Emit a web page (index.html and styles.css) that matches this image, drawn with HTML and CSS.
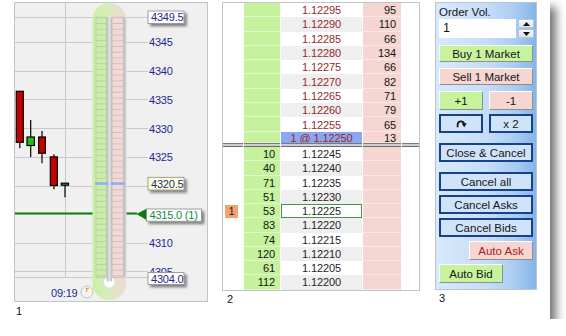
FILE: index.html
```html
<!DOCTYPE html>
<html>
<head>
<meta charset="utf-8">
<link rel="stylesheet" href="styles.css">
</head>
<body>
<div class="sheet">
  <div class="pane pane--chart">
    <div class="chart">
      <svg viewBox="15 3 192 298" width="192" height="298">
        <defs>
          <linearGradient id="tube" x1="0" x2="1" y1="0" y2="0">
            <stop offset="0" stop-color="#c8f1a0"/>
            <stop offset="0.5" stop-color="#d9ecc0"/>
            <stop offset="1" stop-color="#eed9d2"/>
          </linearGradient>
          <linearGradient id="chan" x1="0" x2="1" y1="0" y2="0">
            <stop offset="0" stop-color="#b9b9b9"/>
            <stop offset="0.5" stop-color="#e4e4e4"/>
            <stop offset="1" stop-color="#bdbdbd"/>
          </linearGradient>
          <linearGradient id="shade" x1="0" x2="1" y1="0" y2="0">
            <stop offset="0" stop-color="#b5b5b5"/>
            <stop offset="1" stop-color="#dedede"/>
          </linearGradient>
          <pattern id="rungs" patternUnits="userSpaceOnUse" x="0" y="17.3" width="60" height="5.735">
            <rect x="0" y="0" width="60" height="1" fill="#c4c4c4"/>
          </pattern>
          <filter id="sh" x="-20%" y="-30%" width="150%" height="190%">
            <feDropShadow dx="2.5" dy="2.5" stdDeviation="1.1" flood-color="#000" flood-opacity="0.45"/>
          </filter>
        </defs>

        <g stroke="#c9c9c9" stroke-width="1">
          <line x1="15" y1="17.5" x2="148" y2="17.5"/>
          <line x1="15" y1="42.5" x2="148" y2="42.5"/>
          <line x1="15" y1="71.5" x2="148" y2="71.5"/>
          <line x1="15" y1="99.5" x2="148" y2="99.5"/>
          <line x1="15" y1="128.5" x2="148" y2="128.5"/>
          <line x1="15" y1="157.5" x2="148" y2="157.5"/>
          <line x1="15" y1="186.5" x2="148" y2="186.5"/>
          <line x1="15" y1="243.5" x2="148" y2="243.5"/>
          <line x1="15" y1="271.5" x2="148" y2="271.5"/>
          <line x1="15" y1="277.5" x2="148" y2="277.5"/>
          <line x1="65.5" y1="3" x2="65.5" y2="277.5"/>
        </g>

        <g stroke="#000" stroke-width="1.2">
          <line x1="19.8" y1="142" x2="19.8" y2="148.3"/>
          <rect x="16.3" y="91.3" width="7" height="51" fill="#c40000"/>
          <line x1="30.7" y1="120" x2="30.7" y2="157"/>
          <rect x="27" y="137" width="7.4" height="8.5" fill="#1cc01c"/>
          <line x1="42" y1="131" x2="42" y2="163.3"/>
          <rect x="38.6" y="137" width="6.8" height="16.2" fill="#c40000"/>
          <line x1="54" y1="154.3" x2="54" y2="189.3"/>
          <rect x="50.3" y="156.9" width="7.1" height="28.6" fill="#c40000"/>
          <line x1="65" y1="184" x2="65" y2="197.3"/>
          <rect x="61.3" y="183.2" width="7.2" height="2" fill="#1cc01c"/>
        </g>

        <line x1="15" y1="213.6" x2="137" y2="213.6" stroke="#0a7a0a" stroke-width="2"/>
        <polygon points="136.5,214 147,208.6 147,220.2" fill="#0a7a0a"/>

        <rect x="92.5" y="3" width="33.6" height="297" rx="16.8" ry="16.8" fill="url(#tube)"/>
        <circle cx="109.3" cy="282.2" r="5.9" fill="#fff" stroke="#d6d6d6" stroke-width="0.8"/>
        <rect x="106.7" y="17.3" width="5.4" height="264" fill="url(#chan)"/>
        <rect x="123.3" y="17.3" width="3.3" height="260" fill="url(#shade)"/>
        <rect x="96" y="17.3" width="10.7" height="260" fill="#c6f2a0" stroke="#bdbdbd" stroke-width="0.8"/>
        <rect x="96" y="17.3" width="10.7" height="260" fill="url(#rungs)"/>
        <rect x="112.1" y="17.3" width="11.2" height="260" fill="#f5d8d4" stroke="#bdbdbd" stroke-width="0.8"/>
        <rect x="112.1" y="17.3" width="11.2" height="260" fill="url(#rungs)"/>
        <rect x="95" y="182.2" width="13.3" height="2.6" fill="#8db0f3"/>
        <rect x="111" y="182.2" width="13.3" height="2.6" fill="#8db0f3"/>

        <g class="axis">
          <text x="149" y="46.3">4345</text>
          <text x="149" y="75">4340</text>
          <text x="149" y="103.8">4335</text>
          <text x="149" y="132.5">4330</text>
          <text x="149" y="161.1">4325</text>
          <text x="149" y="247.3">4310</text>
          <text x="149" y="275.8">4305</text>
        </g>

        <g class="tag">
          <rect x="148" y="11" width="36" height="12.5" fill="#fff" stroke="#8a8a8a" stroke-width="0.8" filter="url(#sh)"/>
          <text x="151" y="21.2">4349.5</text>
          <rect x="148" y="177.3" width="36" height="12.7" fill="#ffffd4" stroke="#8a8a8a" stroke-width="0.8" filter="url(#sh)"/>
          <text x="151" y="187.7">4320.5</text>
          <rect x="146.5" y="209" width="55" height="12.2" fill="#fff" stroke="#8a8a8a" stroke-width="0.8" filter="url(#sh)"/>
          <text x="149.5" y="219" class="tag-pos">4315.0 (1)</text>
          <rect x="148" y="272.6" width="36" height="11.8" fill="#fff" stroke="#8a8a8a" stroke-width="0.8" filter="url(#sh)"/>
          <text x="151" y="282.6">4304.0</text>
        </g>

        <text x="51" y="297.3" class="axis-t">09:19</text>
        <circle cx="87" cy="292" r="6" fill="#f3f3f3" stroke="#bcbcbc" stroke-width="0.9"/>
        <path d="M86.6 292 V288.3 H88.8" fill="none" stroke="#f0a02a" stroke-width="1.2"/>
      </svg>
    </div>
    <div class="caption caption--chart">1</div>
  </div>

  <div class="pane pane--dom">
    <div class="dom">
      <div class="ladder">
        <div class="c"></div><div class="c bid"></div><div class="c px sell">1.12295</div><div class="c ask vol">95</div><div class="c"></div>
        <div class="c"></div><div class="c bid"></div><div class="c px sell alt">1.12290</div><div class="c ask vol">110</div><div class="c"></div>
        <div class="c"></div><div class="c bid"></div><div class="c px sell">1.12285</div><div class="c ask vol">66</div><div class="c"></div>
        <div class="c"></div><div class="c bid"></div><div class="c px sell alt">1.12280</div><div class="c ask vol">134</div><div class="c"></div>
        <div class="c"></div><div class="c bid"></div><div class="c px sell">1.12275</div><div class="c ask vol">66</div><div class="c"></div>
        <div class="c"></div><div class="c bid"></div><div class="c px sell alt">1.12270</div><div class="c ask vol">82</div><div class="c"></div>
        <div class="c"></div><div class="c bid"></div><div class="c px sell">1.12265</div><div class="c ask vol">71</div><div class="c"></div>
        <div class="c"></div><div class="c bid"></div><div class="c px sell alt">1.12260</div><div class="c ask vol">79</div><div class="c"></div>
        <div class="c"></div><div class="c bid"></div><div class="c px sell">1.12255</div><div class="c ask vol">65</div><div class="c"></div>
        <div class="c"></div><div class="c bid"></div><div class="c px sell last">1 @ 1.12250</div><div class="c ask vol">13</div><div class="c"></div>
        <div class="sep"></div><div class="sep"></div><div class="sep"></div><div class="sep"></div><div class="sep"></div>
        <div class="c"></div><div class="c bid vol">10</div><div class="c px buy">1.12245</div><div class="c ask"></div><div class="c"></div>
        <div class="c"></div><div class="c bid vol">40</div><div class="c px buy alt">1.12240</div><div class="c ask"></div><div class="c"></div>
        <div class="c"></div><div class="c bid vol">71</div><div class="c px buy">1.12235</div><div class="c ask"></div><div class="c"></div>
        <div class="c"></div><div class="c bid vol">51</div><div class="c px buy alt">1.12230</div><div class="c ask"></div><div class="c"></div>
        <div class="c"><span class="ord">1</span></div><div class="c bid vol">53</div><div class="c px buy sel">1.12225</div><div class="c ask"></div><div class="c"></div>
        <div class="c"></div><div class="c bid vol">83</div><div class="c px buy alt">1.12220</div><div class="c ask"></div><div class="c"></div>
        <div class="c"></div><div class="c bid vol">74</div><div class="c px buy">1.12215</div><div class="c ask"></div><div class="c"></div>
        <div class="c"></div><div class="c bid vol">120</div><div class="c px buy alt">1.12210</div><div class="c ask"></div><div class="c"></div>
        <div class="c"></div><div class="c bid vol">61</div><div class="c px buy">1.12205</div><div class="c ask"></div><div class="c"></div>
        <div class="c"></div><div class="c bid vol">112</div><div class="c px buy alt">1.12200</div><div class="c ask"></div><div class="c"></div>
      </div>
    </div>
    <div class="caption caption--dom">2</div>
  </div>

  <div class="pane pane--order">
    <div class="order">
      <div class="ov-label">Order Vol.</div>
      <div class="ov-row">
        <div class="field">1</div>
        <div class="spin">
          <div class="spin-btn"><svg width="7" height="4" viewBox="0 0 7 4"><polygon points="3.5,0 7,4 0,4" fill="#111"/></svg></div>
          <div class="spin-btn"><svg width="7" height="4" viewBox="0 0 7 4"><polygon points="0,0 7,0 3.5,4" fill="#111"/></svg></div>
        </div>
      </div>
      <button class="btn btn-g btn-slim gap-7">Buy 1 Market</button>
      <button class="btn btn-p btn-slim gap-6">Sell 1 Market</button>
      <div class="pair gap-6">
        <button class="btn btn-g half">+1</button>
        <button class="btn btn-p half">-1</button>
      </div>
      <div class="pair gap-4">
        <button class="btn btn-b half"><svg width="11" height="10" viewBox="0 0 11 10"><path d="M1.6 8.2 V5.6 A3.4 3.4 0 0 1 8.2 4.6" fill="none" stroke="#111" stroke-width="1.7"/><polygon points="5.6,4.3 10.8,4.3 8.2,8.3" fill="#111"/></svg></button>
        <button class="btn btn-b half">x 2</button>
      </div>
      <button class="btn btn-b gap-10">Close &amp; Cancel</button>
      <button class="btn btn-b gap-10">Cancel all</button>
      <button class="btn btn-b gap-4">Cancel Asks</button>
      <button class="btn btn-b gap-4">Cancel Bids</button>
      <button class="btn btn-p auto auto-ask gap-4">Auto Ask</button>
      <button class="btn btn-g auto gap-4">Auto Bid</button>
    </div>
    <div class="caption caption--order">3</div>
  </div>
</div>
</body>
</html>
```

FILE: styles.css
```css
* { box-sizing: border-box; }
html, body { margin: 0; background: #fff; }
body { font-family: "Liberation Sans", Arial, sans-serif; color: #111; }

.sheet {
  width: 550px;
  height: 319px;
  background: #fff;
  box-shadow: 6px 7px 9px rgba(0, 0, 0, 0.55);
  display: flex;
  align-items: flex-start;
  padding: 2px 0 0 14px;
}

.pane { display: flex; flex-direction: column; }
.pane--dom { margin-left: 14px; }
.pane--order { margin-left: 15px; }

.caption { font-size: 11px; line-height: 14px; color: #111; }
.caption--chart { margin-top: 2px; padding-left: 2px; }
.caption--dom { margin-top: 1px; padding-left: 5px; }
.caption--order { margin-top: 1px; padding-left: 4px; }

/* chart */
.chart {
  width: 194px;
  height: 300px;
  border: 1px solid #c4c4c4;
  background: #f0f0f0;
}
.chart svg { display: block; }
.chart text {
  font-family: "Liberation Sans", Arial, sans-serif;
  font-size: 11px;
  fill: #1d2a90;
  letter-spacing: -0.2px;
}
.chart .tag-pos { fill: #0f8a3c; }

/* depth of market */
.dom {
  width: 198px;
  height: 289px;
  border: 1px solid #c4c4c4;
  background: #fff;
}
.ladder {
  display: grid;
  grid-template-columns: 20px 36px 81px 38px 17px;
  column-gap: 1px;
  grid-template-rows: repeat(9, 14.3px) 11.8px 3.5px repeat(10, 14.27px);
  font-size: 11px;
  letter-spacing: -0.1px;
}
.c { display: flex; align-items: center; min-width: 0; }
.vol { justify-content: flex-end; padding-right: 5px; color: #141414; }
.bid { background: #c6f29d; box-shadow: inset 0 -1px 0 rgba(255, 255, 255, 0.45); }
.ask { background: #f5d6d2; box-shadow: inset 0 -1px 0 rgba(255, 255, 255, 0.45); }
.px { justify-content: center; background: #fff; }
.px.alt { background: #efefef; }
.px.sell { color: #962a2a; }
.px.buy { color: #262626; }
.px.last { background: #8ba7f1; }
.px.sel { border: 1px solid #3f9a3f; }
.sep {
  border-top: 1px solid #7a7a7a;
  border-bottom: 1px solid #6a6a6a;
  background: #cfcfcf;
}
.ord {
  margin-left: 2px;
  width: 13px;
  height: 13px;
  background: #f4a272;
  display: flex;
  align-items: center;
  justify-content: center;
  color: #222;
}

/* order panel */
.order {
  width: 102px;
  height: 288px;
  border: 1px solid #b8c4d2;
  background: linear-gradient(to right, #d8e9fb 0%, #c6ddf7 50%, #a9cbf1 80%, #85b4ea 100%);
  padding: 3px 2px 0 3px;
  display: flex;
  flex-direction: column;
  align-items: flex-start;
}
.ov-label { font-size: 11.5px; line-height: 13px; height: 13px; color: #141414; }
.ov-row { display: flex; width: 95px; height: 19px; justify-content: space-between; }
.field {
  width: 77px;
  height: 19px;
  background: #fff;
  font-size: 12.5px;
  line-height: 19px;
  padding-left: 4px;
  color: #111;
}
.spin { width: 16px; display: flex; flex-direction: column; gap: 1px; }
.spin-btn {
  flex: 1;
  display: flex;
  align-items: center;
  justify-content: center;
  background: linear-gradient(#f4f8fc, #dbe6f2);
  border: 1px solid #b6c6d8;
}
.spin-btn svg { display: block; }

.btn {
  font-family: "Liberation Sans", Arial, sans-serif;
  font-size: 11.5px;
  color: #161616;
  display: flex;
  align-items: center;
  justify-content: center;
  padding: 0;
  margin: 0;
  width: 94px;
  height: 19px;
}
.btn-slim { height: 17px; }
.btn-g { background: #c6f39c; border: 1px solid; border-color: #fff #8e8e8e #8e8e8e #fff; }
.btn-p { background: #f5d6d1; border: 1px solid; border-color: #fff #8e8e8e #8e8e8e #fff; }
.btn-b { background: #cfe4fb; border: 2px solid #17428a; }
.pair { display: flex; justify-content: space-between; width: 94px; }
.half { width: 44px; }
.auto { width: 64px; }
.auto-ask { align-self: flex-end; margin-right: 1px; color: #b01818; }
.btn svg { display: block; }

.gap-4 { margin-top: 4px; }
.gap-6 { margin-top: 6px; }
.gap-7 { margin-top: 7px; }
.gap-10 { margin-top: 10px; }
```
